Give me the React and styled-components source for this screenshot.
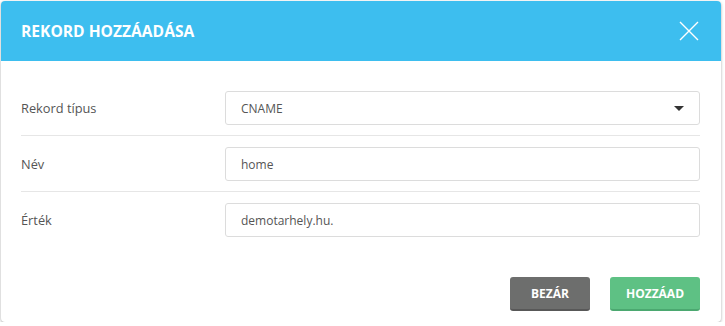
import React from 'react';
import styled, { createGlobalStyle } from 'styled-components';

const GlobalStyle = createGlobalStyle`
  body {
    margin: 0;
    background: #fff;
    font-family: "Open Sans", "Liberation Sans", sans-serif;
  }
`;

const rows = [
  { label: 'Rekord típus', value: 'CNAME', select: true },
  { label: 'Név', value: 'home' },
  { label: 'Érték', value: 'demotarhely.hu.' },
];

const App = () => {
  return (
    <>
      <GlobalStyle />
      <Modal>
        <Header>
          <Title>REKORD HOZZÁADÁSA</Title>
          <Close aria-label="close">
            <svg width="20" height="20" viewBox="0 0 20 20">
              <path d="M1 1 L19 19 M19 1 L1 19" stroke="#fff" strokeWidth="1.4" fill="none" />
            </svg>
          </Close>
        </Header>
        <Body>
          {rows.map((r) => (
            <Row key={r.label}>
              <Label>{r.label}</Label>
              <Field>
                <span>{r.value}</span>
                {r.select && <Caret />}
              </Field>
            </Row>
          ))}
        </Body>
        <Footer>
          <Button $tone="gray">BEZÁR</Button>
          <Button $tone="green">HOZZÁAD</Button>
        </Footer>
      </Modal>
    </>
  );
};

export default App;

const Modal = styled.div`
  margin: 1px 0 0 1px;
  width: 720px;
  background: #fff;
  border-radius: 4px;
  box-shadow: 0 1px 3px rgba(0, 0, 0, 0.35);
  overflow: hidden;
`;

const Header = styled.div`
  height: 60px;
  background: #3dbeef;
  display: flex;
  align-items: center;
  justify-content: space-between;
  padding: 0 22px 0 20px;
`;

const Title = styled.h2`
  margin: 0;
  color: #fff;
  font-size: 15.6px;
  font-weight: 700;
`;

const Close = styled.button`
  background: none;
  border: none;
  padding: 0;
  display: flex;
  cursor: pointer;
`;

const Body = styled.div`
  padding: 19px 21px 0 20px;
`;

const Row = styled.div`
  display: grid;
  grid-template-columns: 204px 1fr;
  align-items: center;
  padding: 11px 0 10px;
  border-bottom: 1px solid #e6e6e6;

  &:last-child {
    border-bottom: none;
  }
`;

const Label = styled.div`
  font-size: 12.8px;
  color: #555;
`;

const Field = styled.div`
  height: 34px;
  box-sizing: border-box;
  border: 1px solid #dcdcdc;
  border-radius: 3px;
  padding: 0 15px;
  display: flex;
  align-items: center;
  justify-content: space-between;
  font-size: 12px;
  color: #555;
`;

const Caret = styled.span`
  width: 0;
  height: 0;
  border-left: 5px solid transparent;
  border-right: 5px solid transparent;
  border-top: 5px solid #333;
`;

const Footer = styled.div`
  display: flex;
  justify-content: flex-end;
  gap: 20px;
  padding: 30px 21px 11px;
`;

const Button = styled.button`
  height: 34px;
  box-sizing: border-box;
  padding: 0 15px;
  min-width: ${(p) => (p.$tone === 'gray' ? '80px' : '90px')};
  border: none;
  border-radius: 3px;
  border-bottom: 2px solid ${(p) => (p.$tone === 'gray' ? '#585858' : '#4ba870')};
  background: ${(p) => (p.$tone === 'gray' ? '#6d6e6d' : '#5ec184')};
  color: #fff;
  font-family: "Open Sans", "Liberation Sans", sans-serif;
  font-size: 12px;
  font-weight: 700;
  cursor: pointer;
`;
